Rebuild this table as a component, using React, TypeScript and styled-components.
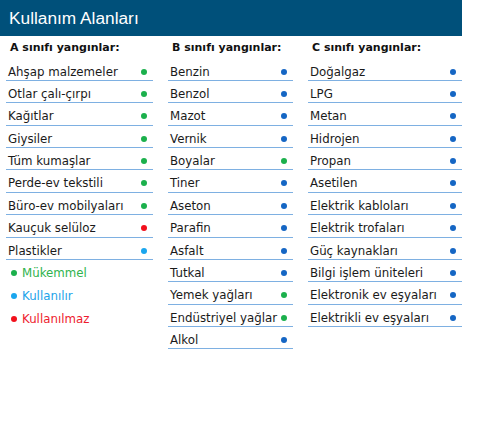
import React from "react";
import styled, { createGlobalStyle } from "styled-components";

const Global = createGlobalStyle`
  html, body { margin: 0; padding: 0; background: #fff; }
  body { font-family: "DejaVu Sans", Verdana, sans-serif; }
`;

type Kind = "g" | "b" | "c" | "r";
const dotColor: Record<Kind, string> = {
  g: "#1bb04c",
  b: "#1566c4",
  c: "#1aa6ee",
  r: "#f2101c",
};

const Page = styled.div`
  width: 500px;
  height: 423px;
`;

const TitleBar = styled.div`
  width: 462px;
  height: 36px;
  background: #00507a;
  color: #fff;
  font-family: "Liberation Sans", Arial, sans-serif;
  font-size: 17.3px;
  line-height: 36px;
  padding-left: 9px;
  box-sizing: border-box;
`;

const Columns = styled.div`
  display: flex;
  gap: 15px;
  padding-left: 6px;
`;

const Column = styled.div<{ $w: number }>`
  width: ${(p) => p.$w}px;
  display: flex;
  flex-direction: column;
`;

const Heading = styled.div`
  font-weight: bold;
  font-size: 11px;
  color: #111;
  line-height: 16px;
  padding: 4px 0 2.6px 4px;
  white-space: nowrap;
`;

const Row = styled.div`
  display: flex;
  justify-content: space-between;
  align-items: center;
  gap: 3px;
  box-sizing: border-box;
  height: 22.375px;
  padding: 5px 6px 0.375px 2px;
  line-height: 16px;
  font-size: 11.8px;
  color: #1a1a1a;
  border-bottom: 1px solid #7eb0e2;
  white-space: nowrap;
`;

const Dot = styled.span<{ $k: Kind }>`
  width: 6px;
  height: 6px;
  border-radius: 50%;
  background: ${(p) => dotColor[p.$k]};
  flex: none;
`;

const Legend = styled.div`
  margin-top: 2px;
  display: flex;
  flex-direction: column;
`;

const LegendItem = styled.div<{ $k: Kind }>`
  display: flex;
  align-items: center;
  gap: 5px;
  height: 23px;
  padding-left: 5px;
  font-size: 11.8px;
  color: ${(p) => (p.$k === "g" ? "#2fb34d" : p.$k === "c" ? "#1ca3ea" : "#ee1b2e")};
`;

const colA: [string, Kind][] = [
  ["Ahşap malzemeler", "g"],
  ["Otlar çalı-çırpı", "g"],
  ["Kağıtlar", "g"],
  ["Giysiler", "g"],
  ["Tüm kumaşlar", "g"],
  ["Perde-ev tekstili", "g"],
  ["Büro-ev mobilyaları", "g"],
  ["Kauçuk selüloz", "r"],
  ["Plastikler", "c"],
];

const colB: [string, Kind][] = [
  ["Benzin", "b"],
  ["Benzol", "b"],
  ["Mazot", "b"],
  ["Vernik", "b"],
  ["Boyalar", "g"],
  ["Tiner", "b"],
  ["Aseton", "b"],
  ["Parafin", "b"],
  ["Asfalt", "b"],
  ["Tutkal", "b"],
  ["Yemek yağları", "g"],
  ["Endüstriyel yağlar", "g"],
  ["Alkol", "b"],
];

const colC: [string, Kind][] = [
  ["Doğalgaz", "b"],
  ["LPG", "b"],
  ["Metan", "b"],
  ["Hidrojen", "b"],
  ["Propan", "b"],
  ["Asetilen", "b"],
  ["Elektrik kabloları", "b"],
  ["Elektrik trofaları", "b"],
  ["Güç kaynakları", "b"],
  ["Bilgi işlem üniteleri", "b"],
  ["Elektronik ev eşyaları", "b"],
  ["Elektrikli ev eşyaları", "b"],
];

const Rows = ({ items }: { items: [string, Kind][] }) => (
  <>
    {items.map(([t, k]) => (
      <Row key={t}>
        <span>{t}</span>
        <Dot $k={k} />
      </Row>
    ))}
  </>
);

export default function App() {
  return (
    <Page>
      <Global />
      <TitleBar>Kullanım Alanları</TitleBar>
      <Columns>
        <Column $w={147}>
          <Heading>A sınıfı yangınlar:</Heading>
          <Rows items={colA} />
          <Legend>
            <LegendItem $k="g">
              <Dot $k="g" />
              Mükemmel
            </LegendItem>
            <LegendItem $k="c">
              <Dot $k="c" />
              Kullanılır
            </LegendItem>
            <LegendItem $k="r">
              <Dot $k="r" />
              Kullanılmaz
            </LegendItem>
          </Legend>
        </Column>
        <Column $w={125}>
          <Heading>B sınıfı yangınlar:</Heading>
          <Rows items={colB} />
        </Column>
        <Column $w={154}>
          <Heading>C sınıfı yangınlar:</Heading>
          <Rows items={colC} />
        </Column>
      </Columns>
    </Page>
  );
}
